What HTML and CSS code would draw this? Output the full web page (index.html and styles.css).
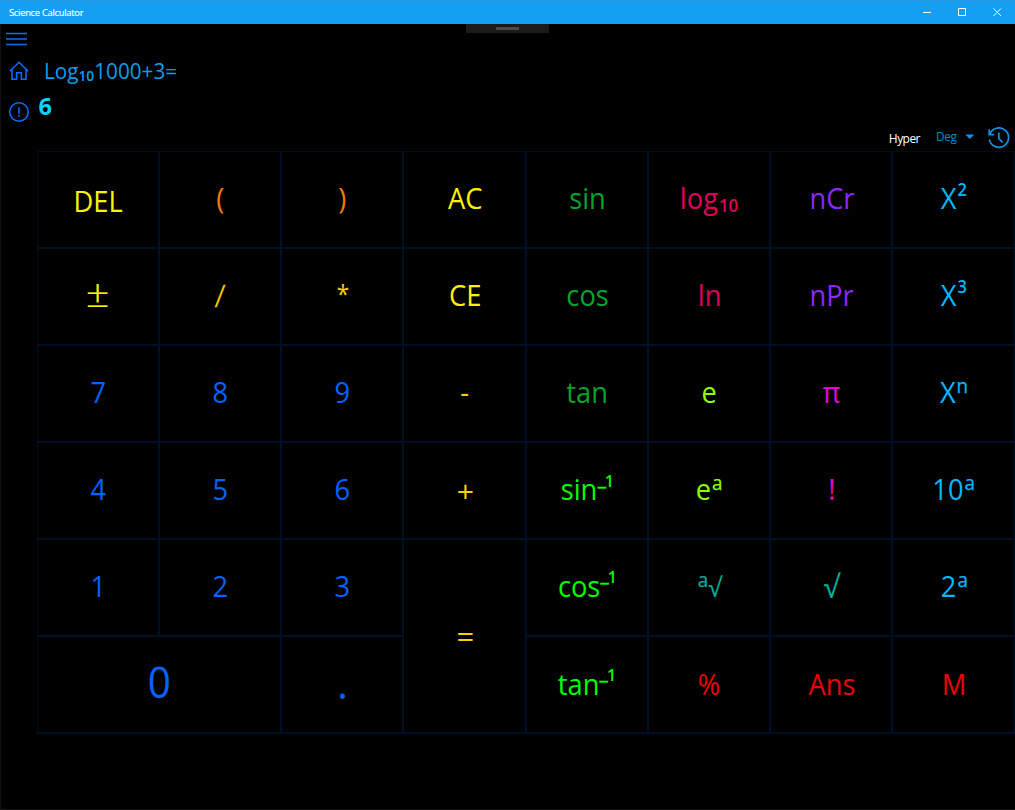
FILE: index.html
```html
<!DOCTYPE html>
<html lang="en">
<head>
<meta charset="utf-8">
<title>Science Calculator</title>
<link rel="stylesheet" href="styles.css">
</head>
<body>
<div class="window">
  <header class="titlebar">
    <span class="title">Science Calculator</span>
    <div class="controls">
      <svg width="35" height="24" viewBox="0 0 35 24"><path d="M13 12.5h8"/></svg>
      <svg width="35" height="24" viewBox="0 0 35 24"><path d="M13.5 8.5h7v7h-7z"/></svg>
      <svg width="35" height="24" viewBox="0 0 35 24"><path d="M13.5 8.5l7.5 7.5M21 8.5L13.5 16"/></svg>
    </div>
  </header>
  <div class="grip"><i></i></div>
  <main class="body">
    <nav class="rail">
      <svg class="menu" width="22" height="14" viewBox="0 0 22 14"><path d="M0 1.5h21M0 7h21M0 12.5h21"/></svg>
      <svg class="home" width="20" height="20" viewBox="0 0 20 20"><path d="M.8 10.2L10 1.3l9.2 8.9M3 8.5v9.8h4.6v-6.6h4.8v6.6H17V8.5"/></svg>
      <svg class="info" width="20" height="20" viewBox="0 0 20 20"><circle cx="10" cy="10" r="9.2"/><path d="M10 5.3v6.4M10 13v1.7"/></svg>
    </nav>
    <section class="content">
      <div class="expression"><span class="fit">Log<span class="sub">10</span>1000+3=</span></div>
      <div class="result">6</div>
      <div class="options">
        <span class="hyper">Hyper</span>
        <span class="deg">Deg</span>
        <svg class="caret" width="10" height="6" viewBox="0 0 10 6"><path d="M.3.5h9L4.8 5z"/></svg>
        <svg class="history" width="22" height="22" viewBox="0 0 22 22"><path d="M1.8 7.2A9.7 9.7 0 1 1 1.4 12.6M1.2 2.6v5h5M10.8 5.5v6l3.8 3.8"/></svg>
      </div>
      <div class="pad">
        <div class="key yellow low"><span class="del">DEL</span></div>
        <div class="key orange"><span class="paren">(</span></div>
        <div class="key orange"><span class="paren">)</span></div>
        <div class="key yellow"><span class="ac">AC</span></div>
        <div class="key green"><span>sin</span></div>
        <div class="key rose"><span>log<span class="sub">10</span></span></div>
        <div class="key violet"><span>nCr</span></div>
        <div class="key sky"><span>X<span class="sup num">2</span></span></div>

        <div class="key yellow"><span class="pm">±</span></div>
        <div class="key gold"><span class="slash">/</span></div>
        <div class="key gold"><span class="star">*</span></div>
        <div class="key yellow"><span class="ce">CE</span></div>
        <div class="key green"><span>cos</span></div>
        <div class="key rose"><span>ln</span></div>
        <div class="key violet"><span>nPr</span></div>
        <div class="key sky"><span>X<span class="sup num">3</span></span></div>

        <div class="key blue"><span>7</span></div>
        <div class="key blue"><span>8</span></div>
        <div class="key blue"><span>9</span></div>
        <div class="key gold"><span class="dash">-</span></div>
        <div class="key green"><span>tan</span></div>
        <div class="key lime"><span>e</span></div>
        <div class="key pink"><span>π</span></div>
        <div class="key sky"><span>X<span class="sup">n</span></span></div>

        <div class="key blue"><span>4</span></div>
        <div class="key blue"><span>5</span></div>
        <div class="key blue"><span>6</span></div>
        <div class="key gold"><span class="plus">+</span></div>
        <div class="key neon"><span>sin<span class="minus">–</span><span class="sup inv">1</span></span></div>
        <div class="key lime"><span>e<span class="sup">a</span></span></div>
        <div class="key pink"><span>!</span></div>
        <div class="key sky"><span>10<span class="sup">a</span></span></div>

        <div class="key blue mid"><span>1</span></div>
        <div class="key blue mid"><span>2</span></div>
        <div class="key blue mid"><span>3</span></div>
        <div class="key gold tall"><span class="equals">=</span></div>
        <div class="key neon mid"><span>cos<span class="minus">–</span><span class="sup inv">1</span></span></div>
        <div class="key teal mid"><span><span class="sup">a</span><span class="root small">√</span></span></div>
        <div class="key teal"><span class="root">√</span></div>
        <div class="key sky mid"><span>2<span class="sup">a</span></span></div>

        <div class="key blue wide"><span class="zero">0</span></div>
        <div class="key blue"><span class="dot">.</span></div>
        <div class="key neon last"><span>tan<span class="minus">–</span><span class="sup inv">1</span></span></div>
        <div class="key red last"><span>%</span></div>
        <div class="key red last"><span>Ans</span></div>
        <div class="key red last"><span>M</span></div>
      </div>
    </section>
  </main>
</div>
</body>
</html>
```
FILE: styles.css
```css
* { box-sizing: border-box; }
body { margin: 0; background: #000; font-family: "Open Sans", "Noto Sans", sans-serif; }
svg { display: block; fill: none; }
.window { position: relative; width: 1015px; height: 810px; background: #000; overflow: hidden; border-bottom: 1px solid #151515; }
.titlebar { display: flex; justify-content: space-between; height: 24px; background: #159ff3; border-top: 1px solid #2b98e2; }
.title { padding-left: 9px; color: #fff; font-size: 9.4px; line-height: 23px; letter-spacing: -.28px; -webkit-text-stroke: .15px; }
.controls { display: flex; margin-top: -1px; }
.controls svg { stroke: #fff; stroke-width: 1; }
.grip { position: absolute; left: 466px; top: 24px; width: 83px; height: 9px; background: #1b1b1b; display: flex; justify-content: center; padding-top: 3px; }
.grip i { width: 23px; height: 3px; background: #4a4a4a; }
.body { display: flex; height: 785px; box-shadow: inset 1px 0 #111; }
.rail { width: 36.5px; flex: none; stroke: #0a6cf5; stroke-width: 1.6; }
.menu { margin: 8px 0 0 6px; }
.home { margin: 15px 0 0 9px; }
.info { margin: 21px 0 0 9px; }
.content { width: 979.5px; flex: none; }
.expression { height: 66px; padding: 33px 0 0 7.5px; font-size: 21px; line-height: 28px; color: #0e9cee; white-space: nowrap; }
.fit { display: inline-block; transform: scaleX(.985); transform-origin: 0 50%; }
.expression .sub { font-size: 14px; top: 2px; margin-left: 0; }
.result { height: 34px; padding-left: 2px; color: #00d5ff; font-size: 23.5px; font-weight: 700; line-height: 32px; }
.options { height: 27px; display: flex; align-items: center; justify-content: flex-end; padding-right: 6.5px; }
.hyper { color: #fff; font-size: 12px; letter-spacing: -.55px; margin-right: 16px; padding-top: 1px; }
.deg { color: #078bd0; font-size: 11.8px; letter-spacing: -.35px; margin-right: 8px; padding-bottom: 3px; }
.caret { fill: #0d94e8; margin: 0 13px 2px 0; }
.history { stroke: #0d94e8; stroke-width: 1.7; }
.pad { display: grid; grid-template-columns: repeat(8, 122.25px); grid-template-rows: repeat(6, 97.1px); border-left: 1px solid #000b1d; border-top: 1px solid #000b1d; margin-top: -.4px; }
.key { display: flex; align-items: center; justify-content: center; border-right: 2px solid #000e26; border-bottom: 2px solid #000e26; padding: 0 0 2.4px 1px; font-size: 29px; line-height: 40px; white-space: nowrap; }
.key > span { display: block; transform: scaleX(.94); }
.key.low { padding-bottom: 0; padding-top: 3.4px; }
.key.mid { padding-bottom: 4px; }
.key.last { padding-bottom: 2px; }
.wide { grid-column: span 2; }
.tall { grid-row: span 2; }
.sub { font-size: 18px; line-height: 0; position: relative; top: 3px; margin-left: 1px; font-weight: 600; }
.sup { font-size: 20px; line-height: 0; position: relative; top: -10px; margin-left: 1px; -webkit-text-stroke: .25px; }
.sup.num { font-size: 17.5px; top: -13px; font-weight: 600; -webkit-text-stroke: 0; }
.sup.inv { font-size: 17px; top: -13.5px; margin-left: -2px; font-weight: 600; -webkit-text-stroke: 0; }
.minus { display: inline-block; width: 10px; font-size: 19px; line-height: 0; position: relative; top: -7.5px; transform: scaleX(1.1); -webkit-text-stroke: .4px; }
.key > .pm { font-size: 34px; transform: scale(1.22, 1.12) translateY(-2px); font-weight: 300; -webkit-text-stroke: .2px; }
.key > .slash { transform: scale(1.12, 1.08); font-weight: 300; -webkit-text-stroke: .3px; }
.key > .star { font-size: 25px; transform: scaleX(.9) translateY(-2px); }
.key > .plus { transform: translateY(1.5px) scaleX(1.04); }
.key > .equals { transform: translateY(1px) scaleX(1.07); }
.root { font-size: 31px; }
.root.small { font-size: 26px; line-height: 0; }
.key .zero { font-size: 43px; transform: scaleX(.94) translateY(-1px); }
.key .dot { font-size: 43px; }
.yellow { color: #fff200; }
.orange { color: #ff7800; }
.gold { color: #ffcf00; }
.green { color: #06a42c; }
.neon { color: #00ff00; }
.rose { color: #e00058; }
.violet { color: #8c28ff; }
.sky { color: #00b8ff; }
.blue { color: #0062ff; }
.lime { color: #8cff00; }
.pink { color: #f000d0; }
.teal { color: #00b09b; }
.red { color: #f00000; }
```
